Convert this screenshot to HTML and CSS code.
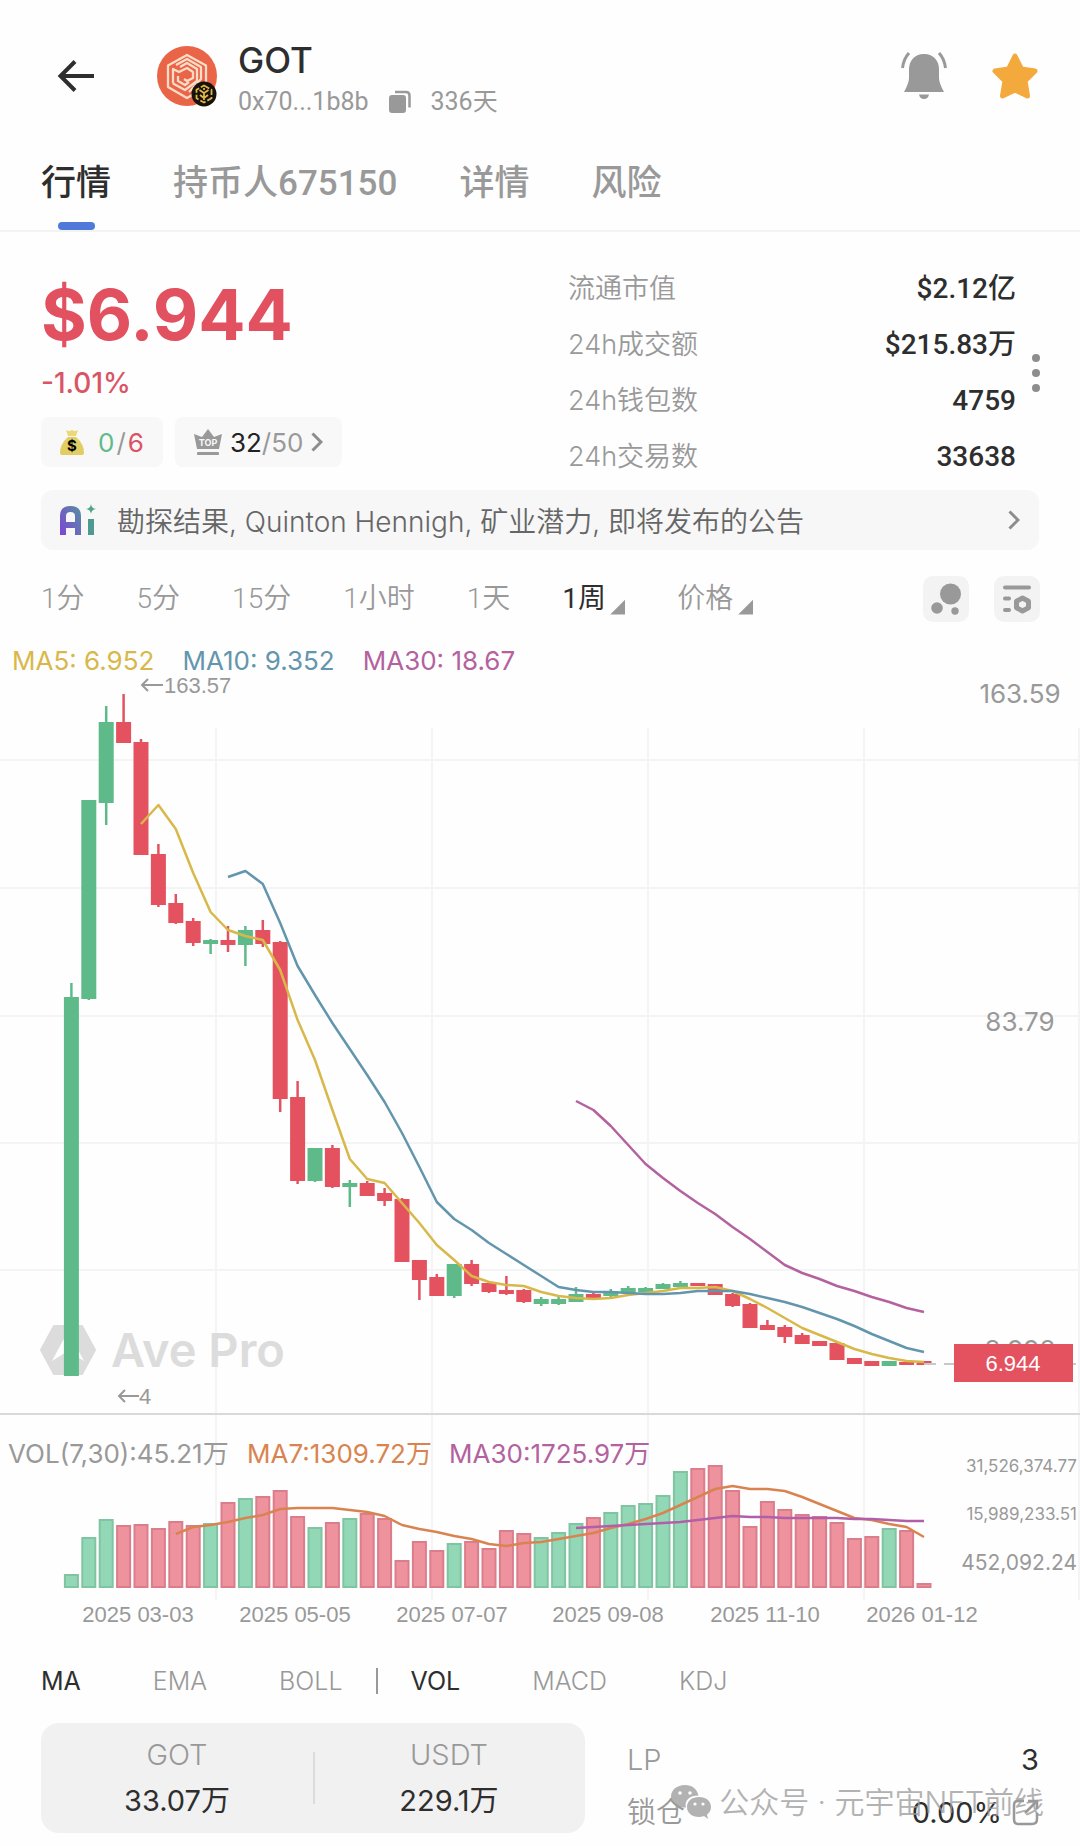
FILE: index.html
```
<!DOCTYPE html>
<html lang="zh-CN">
<head>
  <meta charset="UTF-8" />
  <meta name="viewport" content="width=device-width, initial-scale=1" />
  <title>GOT - Ave Pro</title>
  <link rel="stylesheet" href="styles.css">
</head>
<body>

  <header class="header">
    <button class="icon-btn back" aria-label="返回">
      <svg width="38" height="32" viewBox="0 0 38 32" fill="none" stroke="#2e2e2e" stroke-width="4"><path d="M18 1.500L3.500 16L18 30.500M4 16H37"/></svg>
    </button>
    <div class="token-logo">
      <svg width="62" height="62" viewBox="0 0 62 62" fill="none">
        <circle cx="31" cy="31" r="30" fill="#ea6447"/>
        <g stroke="#fbdcc6" stroke-width="2.300" stroke-linejoin="round">
          <path d="M31 10L50 20.500V42L31 53L12 42V20.500Z"/>
          <path d="M17 38.500V24L23 27L31 23L37 27V33L31 36L28 34"/>
          <path d="M20 20L31 14L45 22V34L33 47"/>
          <path d="M17 38.500L29 45L41 36V24L31 18L24 22"/>
          <path d="M22 31V36L29 40L33 37"/>
        </g>
        <circle cx="48" cy="49" r="12.500" fill="#17120c"/>
        <g stroke="#e0b54a" stroke-width="1.800" stroke-linejoin="round">
          <path d="M48 40.500L55.500 44.700V53.300L48 57.500L40.500 53.300V44.700Z" stroke-dasharray="6 2"/>
          <path d="M43.500 45L48 48L52.500 45M48 48V55M44 50L48 53L52 50M48 43V45"/>
        </g>
      </svg>
    </div>
    <div class="token-info">
      <h1>GOT</h1>
      <div class="token-sub">
        <span>0x70...1b8b</span>
        <button class="icon-btn" aria-label="复制地址">
          <svg width="22" height="24" viewBox="0 0 22 24"><rect x="0" y="5" width="17" height="18" rx="3" fill="#999"/><path d="M6 2H17Q20.500 2 20.500 5.500V17.500" fill="none" stroke="#999" stroke-width="2.500"/></svg>
        </button>
        <span>336天</span>
      </div>
    </div>
    <div class="header-actions">
      <button class="icon-btn" aria-label="提醒">
        <svg width="46" height="48" viewBox="0 0 46 48" fill="#999"><path d="M23 2C13 2 8 9.500 8 17V26Q8 31 3 40H43Q38 31 38 26V17C38 9.500 33 2 23 2ZM18 42.500H28Q27 47 23 47Q19 47 18 42.500Z"/><path d="M8 1Q2.500 7 1.500 16M38 1Q43.500 7 44.500 16" fill="none" stroke="#999" stroke-width="3"/></svg>
      </button>
      <button class="icon-btn" aria-label="收藏">
        <svg width="46" height="48" viewBox="0 0 46 48"><path d="M23 4L29.500 17L43 19L33 29L35.500 44L23 38L10.500 44L13 29L3 19L16.500 17Z" fill="#f3a93c" stroke="#f3a93c" stroke-width="5" stroke-linejoin="round"/></svg>
      </button>
    </div>
  </header>

  <nav class="tabs">
    <button class="tab active">行情</button>
    <button class="tab">持币人675150</button>
    <button class="tab">详情</button>
    <button class="tab">风险</button>
  </nav>

  <main>
    <section class="overview">
      <div class="price-box">
        <div class="price">$6.944</div>
        <div class="change">-1.01%</div>
        <div class="pills">
          <button class="pill">
            <svg width="24" height="26" viewBox="0 0 24 26"><path d="M6 1Q9 3 12 1Q15 3 18 1L16 7H8Z" fill="#ecd878"/><path d="M8 8H16Q24 15 24 24Q24 26 21 26H3Q0 26 0 24Q0 15 8 8Z" fill="#e2cd62"/><text x="12" y="22" class="bag-text">$</text></svg>
            <span class="ratio wide"><span class="up">0</span>/<span class="down">6</span></span>
          </button>
          <button class="pill top">
            <svg width="28" height="27" viewBox="0 0 28 27" fill="#999"><path d="M0 5L8 8L14 0L20 8L28 5L25 20H3Z"/><rect x="3" y="23" width="22" height="3" rx="1"/><text x="14" y="17" class="top-text">TOP</text></svg>
            <span class="ratio"><b>32</b>/50</span>
            <svg class="chev" width="12" height="20" viewBox="0 0 12 20"><path d="M1.500 1.500L10 10L1.500 18.500"/></svg>
          </button>
        </div>
      </div>
      <dl class="stats">
        <div><dt>流通市值</dt><dd>$2.12亿</dd></div>
        <div><dt>24h成交额</dt><dd>$215.83万</dd></div>
        <div><dt>24h钱包数</dt><dd>4759</dd></div>
        <div><dt>24h交易数</dt><dd>33638</dd></div>
      </dl>
      <button class="icon-btn more" aria-label="更多">
        <svg width="8" height="38" viewBox="0 0 8 38" fill="#8d8d8d"><circle cx="4" cy="4" r="4"/><circle cx="4" cy="19" r="4"/><circle cx="4" cy="34" r="4"/></svg>
      </button>
    </section>

    <a class="ai-banner" href="#">
      <svg width="37" height="32" viewBox="0 0 37 32">
        <defs><linearGradient id="ai" x1="0" y1="1" x2="1" y2="0"><stop offset="0" stop-color="#7b4bd0"/><stop offset="1" stop-color="#5a86a8"/></linearGradient></defs>
        <path d="M3 31V12Q3 5 10.500 5Q18 5 18 12V31M4 21H17" fill="none" stroke="url(#ai)" stroke-width="6"/>
        <rect x="28" y="15" width="6" height="16" fill="#4f9a90"/>
        <path d="M31 0Q31.500 4.500 36 5Q31.500 5.500 31 10Q30.500 5.500 26 5Q30.500 4.500 31 0Z" fill="#4fa58c"/>
      </svg>
      <span class="ai-text">勘探结果, Quinton Hennigh, 矿业潜力, 即将发布的公告</span>
      <svg class="chev" width="12" height="20" viewBox="0 0 12 20"><path d="M1.500 1.500L10 10L1.500 18.500"/></svg>
    </a>

    <div class="periods">
      <button>1分</button>
      <button>5分</button>
      <button>15分</button>
      <button>1小时</button>
      <button>1天</button>
      <label class="drop active"><select aria-label="周期"><option>1周</option><option>1月</option></select></label>
      <label class="drop"><select aria-label="类型"><option>价格</option><option>市值</option></select></label>
      <div class="tools">
        <button class="tool" aria-label="气泡图">
          <svg width="30" height="32" viewBox="0 0 30 32" fill="#999"><circle cx="19.500" cy="11" r="10.500"/><circle cx="6" cy="25" r="5.800"/><circle cx="24" cy="28" r="3.700"/></svg>
        </button>
        <button class="tool" aria-label="指标设置">
          <svg width="30" height="30" viewBox="0 0 30 30"><path d="M3 3.500H27M3 14.500H7M3 26H7" stroke="#999" stroke-width="4" stroke-linecap="round"/><path d="M20.500 14L26.500 17.200V23.800L20.500 27L14.500 23.800V17.200Z" fill="none" stroke="#999" stroke-width="5" stroke-linejoin="round"/></svg>
        </button>
      </div>
    </div>

    <section class="chart">
      <div class="ma-legend">
        <span class="ma5">MA5: 6.952</span>
        <span class="ma10">MA10: 9.352</span>
        <span class="ma30">MA30: 18.67</span>
      </div>
      <svg id="kline" class="kline" viewBox="0 674 1080 956" role="img" aria-label="GOT 周K线">
        <g id="grid" class="grid"></g>
        <line x1="0" y1="1414" x2="1080" y2="1414" class="split"/>
        <g class="watermark">
          <path d="M54 1326H82L95 1350L82 1374H54L41 1350Z" stroke-width="2" stroke-linejoin="round"/>
          <path d="M68 1331L84 1361L68 1351L52 1361Z" class="wm-hole"/>
          <text x="111" y="1367">Ave Pro</text>
        </g>
        <g id="candles"></g>
        <g id="lines" class="lines"></g>
        <line x1="924" y1="1364" x2="1080" y2="1364" class="last-line"/>
        <g class="mark">
          <path d="M163 685H142M148 679L142 685L148 691M139 1396H119M125 1390L119 1396L125 1402"/>
          <text x="164" y="693">163.57</text>
          <text x="139" y="1404">4</text>
        </g>
        <g class="axis">
          <text x="1020" y="703">163.59</text>
          <text x="1020" y="1031">83.79</text>
          <text x="1020" y="1359">3.998</text>
        </g>
        <rect x="954" y="1344" width="119" height="38" class="tag"/>
        <text x="1013" y="1371" class="tag-text">6.944</text>
        <g class="vol-legend">
          <text x="8" y="1463" class="vol">VOL(7,30):45.21万</text>
          <text x="247" y="1463" class="ma7">MA7:1309.72万</text>
          <text x="449" y="1463" class="ma30">MA30:1725.97万</text>
        </g>
        <g class="vol-axis">
          <text x="1077" y="1472">31,526,374.77</text>
          <text x="1077" y="1520">15,989,233.51</text>
          <text x="1077" y="1570" class="low">452,092.24</text>
        </g>
        <g class="dates">
          <text x="138" y="1622">2025 03-03</text>
          <text x="295" y="1622">2025 05-05</text>
          <text x="452" y="1622">2025 07-07</text>
          <text x="608" y="1622">2025 09-08</text>
          <text x="765" y="1622">2025 11-10</text>
          <text x="922" y="1622">2026 01-12</text>
        </g>
      </svg>
    </section>

    <div class="indicators">
      <button class="active">MA</button>
      <button>EMA</button>
      <button>BOLL</button>
      <i class="bar"></i>
      <button class="active">VOL</button>
      <button>MACD</button>
      <button>KDJ</button>
    </div>

    <section class="pool">
      <div class="pool-card">
        <div class="pool-item"><span>GOT</span><strong>33.07万</strong></div>
        <div class="pool-item"><span>USDT</span><strong>229.1万</strong></div>
      </div>
      <div class="pool-side">
        <div class="pool-row"><span>LP</span><strong>3</strong></div>
        <div class="pool-row lock"><span>锁仓</span><strong>0.00%</strong>
          <a href="#" aria-label="查看锁仓"><svg width="27" height="27" viewBox="0 0 27 27" fill="none" stroke="#999" stroke-width="2.500"><path d="M12 2H6Q2 2 2 6V20Q2 25 6 25H20Q25 25 25 20V14M16 2H25V10M25 2L13 14"/></svg></a>
        </div>
        <div class="account">
          <svg width="40" height="34" viewBox="0 0 40 34"><path d="M14 0C6 0 0 5 0 11.500C0 15 2 18 5 20L4 25L9.500 22Q12 22.500 15 22.500C13 15 19 10.500 27.500 10.500C26 4 21 0 14 0Z"/><path d="M28 12C21 12 16 16 16 22C16 28 21 32 28 32Q30.500 32 33 31L37 34L36 29.500Q40 26.500 40 22C40 16 35 12 28 12Z"/><g fill="#fff"><circle cx="9" cy="8" r="1.800"/><circle cx="19" cy="8" r="1.800"/><circle cx="24" cy="19" r="1.600"/><circle cx="32" cy="19" r="1.600"/></g></svg>
          <span>公众号 · 元宇宙NFT前线</span>
        </div>
      </div>
    </section>
  </main>

  <script src="chart.js"></script>
</body>
</html>
```
FILE: styles.css
```
* {
  box-sizing: border-box;
}
body {
  margin: 0;
  background-color: #fefefe;
  color: #2e2e2e;
  font-family: Roboto, "Noto Sans CJK SC", sans-serif;
  font-size: 26px;
}
button, select {
  padding: 0;
  border: none;
  background: none;
  font: inherit;
  color: inherit;
  cursor: pointer;
}
svg {
  display: block;
  flex: none;
}
h1, dl, dd {
  margin: 0;
}

/* Header */
.header {
  display: flex;
  align-items: center;
  padding: 36px 42px 0 57px;
  height: 116px;
}
.token-logo {
  margin: 0 20px 0 61px;
}
.token-info {
  padding-top: 8px;
}
.token-info h1 {
  font-family: Inter, sans-serif;
  font-size: 35px;
  line-height: 44px;
  font-weight: 500;
}
.token-sub {
  display: flex;
  align-items: center;
  gap: 20px;
  line-height: 40px;
  font-size: 25px;
  color: #999;
}
.header-actions {
  display: flex;
  gap: 45px;
  margin-left: auto;
}

/* Tabs */
.tabs {
  display: flex;
  gap: 62px;
  height: 116px;
  padding: 20px 41px 0;
  border-bottom: 2px solid #f3f3f3;
}
.tab {
  position: relative;
  padding-bottom: 8px;
  font-size: 35px;
  font-weight: 500;
  color: #999;
}
.tab.active {
  color: #2e2e2e;
}
.tab.active::after {
  content: "";
  position: absolute;
  left: 50%;
  bottom: 0;
  width: 37px;
  height: 8px;
  margin-left: -18px;
  border-radius: 4px;
  background: #4f7ada;
}

/* Price and 24h stats */
.overview {
  display: flex;
  padding: 29px 40px 0 41px;
}
.price-box {
  width: 527px;
}
.price {
  font-family: Inter, sans-serif;
  font-size: 70px;
  line-height: 108px;
  font-weight: 700;
  color: #e2515f;
}
.change {
  font-family: Inter, sans-serif;
  font-size: 28px;
  line-height: 28px;
  font-weight: 500;
  color: #d95565;
}
.pills {
  display: flex;
  gap: 12px;
  margin-top: 20px;
}
.pill {
  display: flex;
  align-items: center;
  gap: 14px;
  height: 50px;
  padding: 0 19px;
  border-radius: 8px;
  background: #f8f8f8;
  color: #999;
}
.pill.top {
  gap: 8px;
}
.ratio {
  font-family: Inter, sans-serif;
  font-size: 26px;
}
.ratio.wide {
  display: flex;
  gap: 2px;
}
.ratio b {
  color: #222;
  font-weight: 400;
}
.up {
  color: #5fba8a;
}
.down {
  color: #d95565;
}
.bag-text {
  font: 700 15px Inter, sans-serif;
  text-anchor: middle;
}
.top-text {
  font: 700 9px Inter, sans-serif;
  text-anchor: middle;
  fill: #f8f8f8;
}
.chev {
  fill: none;
  stroke: #8d8d8d;
  stroke-width: 3;
}
.stats {
  flex: 1;
}
.stats div {
  display: flex;
  justify-content: space-between;
  height: 56px;
  line-height: 56px;
}
.stats dt {
  font-family: Inter, "Noto Sans CJK SC", sans-serif;
  font-size: 27px;
  color: #999;
  font-weight: 350;
}
.stats dd {
  font-size: 28px;
  font-weight: 500;
}
.more {
  align-self: center;
  margin-left: 16px;
}

/* AI banner */
.ai-banner {
  display: flex;
  align-items: center;
  height: 60px;
  margin: 5px 41px 0;
  padding: 0 19px;
  border-radius: 12px;
  background: #f7f7f7;
  color: #666;
  text-decoration: none;
}
.ai-text {
  flex: 1;
  margin-left: 20px;
  font-family: Inter, "Noto Sans CJK SC", sans-serif;
  font-size: 28px;
  font-weight: 350;
}

/* Period row */
.periods {
  display: flex;
  align-items: center;
  gap: 52px;
  height: 94px;
  padding: 4px 40px 0 41px;
  font-size: 28px;
  line-height: 40px;
  color: #999;
  font-weight: 350;
}
.drop {
  display: flex;
  align-items: center;
  gap: 4px;
}
.drop::after {
  content: "";
  width: 15px;
  height: 15px;
  margin-top: 16px;
  background: #999;
  clip-path: polygon(100% 0, 100% 100%, 0 100%);
}
.drop select {
  appearance: none;
  height: 40px;
}
.drop.active {
  color: #2e2e2e;
  font-weight: 400;
}
.tools {
  display: flex;
  gap: 25px;
  margin-left: auto;
}
.tool {
  display: flex;
  align-items: center;
  justify-content: center;
  width: 46px;
  height: 46px;
  border-radius: 10px;
  background: #f3f3f3;
}

/* Chart */
.ma-legend {
  display: flex;
  gap: 28px;
  padding: 4px 0 0 12px;
  font: 26px/26px Inter, sans-serif;
}
.kline {
  width: 100%;
  height: auto;
}
.ma5 {
  color: #d9b84a;
}
.ma10 {
  color: #6396ad;
}
.ma30 {
  color: #b3629f;
  fill: #b3629f;
}
.ma7 {
  fill: #d98450;
}
.vol {
  fill: #999;
}
.grid line {
  stroke: #f4f4f4;
  stroke-width: 2;
}
.split {
  stroke: #d9d9d9;
  stroke-width: 2;
}
.watermark {
  fill: #dcdcdc;
  stroke: #dcdcdc;
  stroke-width: 0;
}
.watermark text {
  font: 600 47px Inter, sans-serif;
}
.watermark .wm-hole {
  fill: #fefefe;
}
.lines polyline {
  fill: none;
  stroke-width: 2.5;
  stroke-linejoin: round;
}
.last-line {
  stroke: #c9c9c9;
  stroke-width: 2;
  stroke-dasharray: 12 8;
}
.mark text, .dates text, .tag-text {
  font: 22px "Liberation Sans", sans-serif;
  fill: #999;
}
.mark path {
  fill: none;
  stroke: #999;
  stroke-width: 2;
}
.axis text {
  font: 26px Inter, sans-serif;
  fill: #999;
  text-anchor: middle;
}
.tag {
  fill: #e4525f;
}
.kline .tag-text {
  fill: #fff;
  text-anchor: middle;
}
.vol-legend {
  font: 26px Inter, "Noto Sans CJK SC", sans-serif;
}
.vol-axis {
  font: 17px Inter, sans-serif;
  fill: #999;
  text-anchor: end;
}
.vol-axis .low {
  font-size: 21px;
}
.dates {
  text-anchor: middle;
}

/* Indicators */
.indicators {
  display: flex;
  align-items: center;
  gap: 72px;
  height: 86px;
  padding: 16px 41px 0;
  font-family: Inter, sans-serif;
  font-size: 25px;
  color: #999;
  font-weight: 350;
}
.indicators .active {
  color: #2e2e2e;
  font-weight: 400;
}
.bar {
  width: 2px;
  height: 26px;
  margin: 0 -39px;
  background: #999;
}

/* Pool */
.pool {
  display: flex;
  align-items: flex-start;
  gap: 42px;
  padding: 7px 41px 6px;
  font-family: Inter, "Noto Sans CJK SC", sans-serif;
  font-size: 29px;
}
.pool-card {
  display: flex;
  flex: 1 1 544px;
  padding: 9px 0;
  border-radius: 18px;
  background: #f1f1f1;
}
.pool-item {
  flex: 1;
  text-align: center;
}
.pool-item + .pool-item {
  background: linear-gradient(#dcdcdc, #dcdcdc) left center / 2px 52px no-repeat;
}
.pool-item span, .pool-item strong {
  display: block;
  line-height: 46px;
}
.pool span {
  color: #999;
  font-weight: 350;
}
.pool strong {
  font-weight: 400;
}
.pool-side {
  position: relative;
  flex: 1 1 412px;
  padding-top: 10px;
}
.pool-row {
  display: flex;
  line-height: 53px;
}
.pool-row span {
  flex: 1;
}
.pool-row.lock {
  align-items: center;
  gap: 10px;
}
.account {
  position: absolute;
  right: -5px;
  top: 56px;
  display: flex;
  align-items: center;
  gap: 8px;
  font-size: 30px;
  line-height: 46px;
  opacity: 0.75;
  fill: #999;
  white-space: nowrap;
}
```
FILE: chart.js
```
const UP = '#5fba8a';
const DOWN = '#e4525f';
const START_X = 71.4;
const STEP = 17.4;
const WIDTH = 15;

// [direction, body top, body bottom, wick top, wick bottom, volume height]
const bars = [
  [1, 997, 1376, 983, 1376, 14], [1, 800, 999, 800, 1000, 51], [1, 722, 803, 706, 825, 69],
  [0, 722, 743, 694, 743, 63], [0, 742, 855, 739, 855, 64], [0, 854, 905, 844, 907, 60],
  [0, 903, 923, 894, 924, 67], [0, 921, 943, 918, 946, 63], [1, 940, 944, 939, 954, 65],
  [0, 940, 945, 926, 952, 86], [1, 930, 945, 926, 966, 90], [0, 930, 944, 920, 947, 92],
  [0, 942, 1099, 941, 1112, 98], [0, 1097, 1181, 1081, 1184, 72], [1, 1148, 1181, 1148, 1182, 61],
  [0, 1148, 1187, 1145, 1188, 66], [1, 1183, 1187, 1180, 1207, 70], [0, 1183, 1196, 1181, 1196, 75],
  [0, 1193, 1201, 1188, 1206, 70], [0, 1199, 1262, 1198, 1262, 28], [0, 1260, 1280, 1260, 1300, 47],
  [0, 1277, 1296, 1274, 1296, 38], [1, 1264, 1296, 1264, 1298, 45], [0, 1264, 1284, 1260, 1286, 47],
  [0, 1283, 1292, 1282, 1293, 40], [0, 1290, 1294, 1276, 1295, 58], [0, 1290, 1302, 1289, 1303, 55],
  [1, 1299, 1304, 1297, 1306, 51], [1, 1299, 1304, 1297, 1305, 56], [1, 1294, 1302, 1287, 1302, 65],
  [0, 1294, 1298, 1292, 1298, 71], [1, 1291, 1296, 1289, 1297, 76], [1, 1288, 1293, 1286, 1294, 83],
  [1, 1288, 1292, 1287, 1292, 85], [1, 1284, 1289, 1283, 1289, 93], [1, 1283, 1287, 1281, 1287, 117],
  [0, 1283, 1286, 1283, 1286, 120], [0, 1284, 1295, 1284, 1295, 123], [0, 1294, 1306, 1293, 1307, 98],
  [0, 1304, 1328, 1303, 1328, 62], [0, 1325, 1330, 1320, 1330, 87], [0, 1327, 1337, 1325, 1343, 79],
  [0, 1335, 1344, 1333, 1344, 74], [0, 1341, 1346, 1341, 1346, 72], [0, 1343, 1360, 1342, 1360, 66],
  [0, 1358, 1364, 1358, 1364, 50], [0, 1361, 1366, 1361, 1366, 52], [1, 1361, 1366, 1361, 1366, 60],
  [0, 1362, 1365, 1362, 1365, 58], [0, 1361, 1365, 1361, 1365, 5]
];

// from: index of the first bar that has an average
const averages = [
  { color: '#d9b84a', from: 4, y: [824, 805, 829, 873, 912, 930, 936, 940, 970, 1020, 1060, 1110, 1159, 1179, 1183, 1203, 1223, 1245, 1260, 1276, 1282, 1285, 1286, 1292, 1296, 1298, 1299, 1298, 1295, 1293, 1291, 1288, 1288, 1287, 1291, 1299, 1308, 1318, 1328, 1335, 1342, 1349, 1354, 1358, 1361, 1362] },
  { color: '#6396ad', from: 9, y: [877, 871, 884, 923, 966, 995, 1023, 1049, 1075, 1102, 1133, 1167, 1202, 1219, 1230, 1243, 1254, 1265, 1276, 1287, 1290, 1292, 1292, 1293, 1294, 1294, 1293, 1291, 1291, 1291, 1294, 1298, 1302, 1307, 1313, 1319, 1326, 1334, 1341, 1348, 1352] },
  { color: '#b3629f', from: 29, y: [1101, 1110, 1126, 1145, 1164, 1178, 1191, 1203, 1214, 1227, 1239, 1252, 1265, 1273, 1279, 1286, 1291, 1297, 1302, 1308, 1312] },
  { color: '#d98450', from: 6, y: [1534, 1527, 1525, 1522, 1518, 1515, 1509, 1508, 1508, 1508, 1510, 1512, 1516, 1525, 1529, 1532, 1536, 1539, 1544, 1546, 1543, 1542, 1539, 1536, 1533, 1528, 1524, 1519, 1513, 1505, 1497, 1489, 1486, 1489, 1489, 1491, 1497, 1504, 1511, 1518, 1520, 1524, 1527, 1537] },
  { color: '#b05fa8', from: 29, y: [1528, 1527, 1526, 1525, 1524, 1523, 1522, 1520, 1518, 1516, 1517, 1517, 1518, 1518, 1518, 1518, 1519, 1519, 1520, 1521, 1521] }
];

const VOL_BASE = 1588;

function add(parent, tag, attrs) {
  const el = document.createElementNS('http://www.w3.org/2000/svg', tag);
  for (const key in attrs) el.setAttribute(key, attrs[key]);
  document.getElementById(parent).appendChild(el);
}

[760, 888, 1016, 1143, 1270].forEach(y => add('grid', 'line', { x1: 0, y1: y, x2: 1080, y2: y }));
[216, 432, 648, 864, 1079].forEach(x => add('grid', 'line', { x1: x, y1: 728, x2: x, y2: 1600 }));

bars.forEach(([up, top, bottom, high, low, vol], i) => {
  const x = START_X + i * STEP;
  const color = up ? UP : DOWN;
  add('candles', 'line', { x1: x, y1: high, x2: x, y2: low, stroke: color, 'stroke-width': 2.5 });
  add('candles', 'rect', { x: x - WIDTH / 2, y: top, width: WIDTH, height: bottom - top, fill: color });
  // Volume bar
  add('candles', 'rect', {
    x: x - 6.5, y: VOL_BASE - vol + 1, width: 13, height: vol - 2,
    fill: up ? '#93d8b6' : '#ee939d', stroke: up ? '#80c4a2' : '#db7d8b', 'stroke-width': 2
  });
});

averages.forEach(({ color, from, y }) => {
  const points = y.map((v, i) => (START_X + (from + i) * STEP) + ',' + v).join(' ');
  add('lines', 'polyline', { points, stroke: color });
});
```
